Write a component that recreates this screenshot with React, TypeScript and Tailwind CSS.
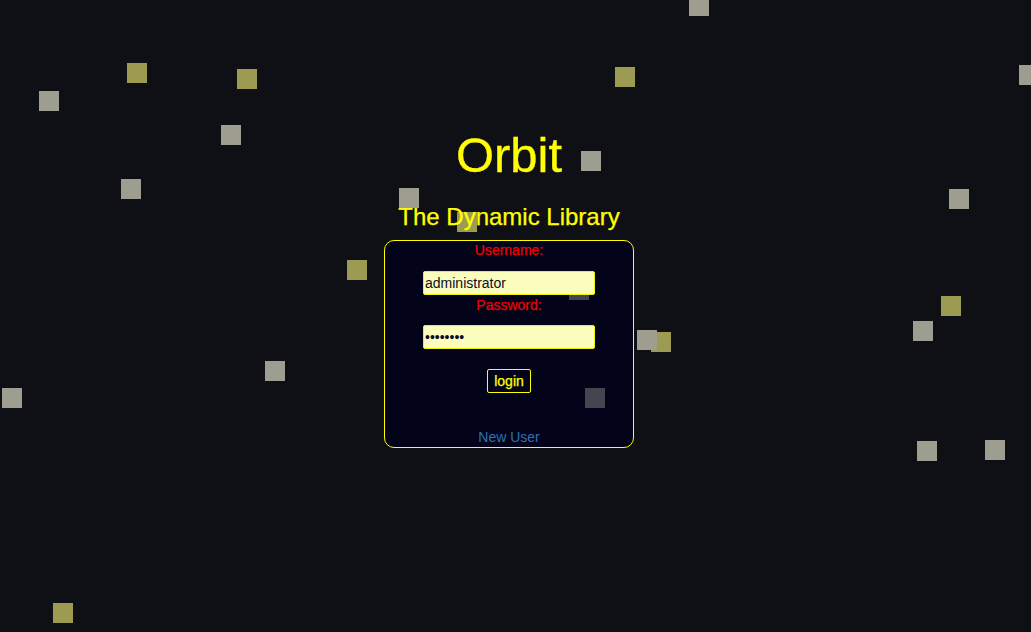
import React from "react";

type Sq = { x: number; y: number; c: "g" | "o" };

const squares: Sq[] = [
  { x: 689, y: -4, c: "g" },
  { x: 127, y: 63, c: "o" },
  { x: 237, y: 69, c: "o" },
  { x: 39, y: 91, c: "g" },
  { x: 221, y: 125, c: "g" },
  { x: 121, y: 179, c: "g" },
  { x: 615, y: 67, c: "o" },
  { x: 1019, y: 65, c: "g" },
  { x: 581, y: 151, c: "g" },
  { x: 399, y: 188, c: "g" },
  { x: 457, y: 212, c: "o" },
  { x: 949, y: 189, c: "g" },
  { x: 347, y: 260, c: "o" },
  { x: 941, y: 296, c: "o" },
  { x: 913, y: 321, c: "g" },
  { x: 651, y: 332, c: "o" },
  { x: 637, y: 330, c: "g" },
  { x: 265, y: 361, c: "g" },
  { x: 2, y: 388, c: "g" },
  { x: 917, y: 441, c: "g" },
  { x: 985, y: 440, c: "g" },
  { x: 53, y: 603, c: "o" },
];

export default function App() {
  return (
    <div className="relative h-[632px] w-full overflow-hidden bg-[#0f1016] font-['Liberation_Sans',Arial,sans-serif]">
      {squares.map((s, i) => (
        <div
          key={i}
          className={
            "absolute h-[20px] w-[20px] " +
            (s.c === "g" ? "bg-[#9d9e8f]" : "bg-[#9d9b52]")
          }
          style={{ left: s.x, top: s.y }}
        />
      ))}

      <div className="relative z-10 flex w-[1018px] flex-col items-center pt-[131px]">
        <h1 className="text-[49px] leading-[48px] text-[#ffff00] [-webkit-text-stroke:0.3px_#ffff00]">
          Orbit
        </h1>
        <h2 className="mt-[26px] text-[24px] leading-[24px] text-[#ffff00] [-webkit-text-stroke:0.25px_#ffff00]">
          The Dynamic Library
        </h2>

        <div className="relative mt-[11px] flex h-[208px] w-[250px] flex-col items-center rounded-[10px] border border-[#ffff00] bg-[#03041a] pt-[1px]">
          <div className="absolute left-[184px] top-[39px] h-[20px] w-[20px] bg-[#45454f]" />
          <div className="absolute left-[200px] top-[147px] h-[20px] w-[20px] bg-[#45454f]" />

          <label className="relative z-10 text-[14px] leading-[16px] text-[#f00000] [-webkit-text-stroke:0.25px_#f00000]">
            Username:
          </label>
          <input
            type="text"
            defaultValue="administrator"
            className="relative z-10 mt-[13px] h-[24px] w-[172px] rounded-[2px] border border-[#f2f200] bg-[#fbfdbd] pl-[1px] text-[14px] text-[#0c0c28] outline-none"
          />
          <label className="relative z-10 mt-[2px] text-[14px] leading-[16px] text-[#f00000] [-webkit-text-stroke:0.25px_#f00000]">
            Password:
          </label>
          <input
            type="password"
            defaultValue="12345678"
            className="relative z-10 mt-[12px] h-[24px] w-[172px] rounded-[2px] border border-[#f2f200] bg-[#fbfdbd] pl-[1px] text-[14px] text-[#0c0c28] outline-none"
          />
          <button className="relative z-10 mt-[20px] flex h-[24px] w-[44px] items-center justify-center rounded-[2px] border border-[#ffff00] bg-transparent text-[14px] leading-none text-[#ffff00] [-webkit-text-stroke:0.25px_#ffff00]">
            login
          </button>
          <a className="relative z-10 mt-[36px] cursor-pointer text-[14px] leading-[16px] text-[#2f70bb]">
            New User
          </a>
        </div>
      </div>
    </div>
  );
}
